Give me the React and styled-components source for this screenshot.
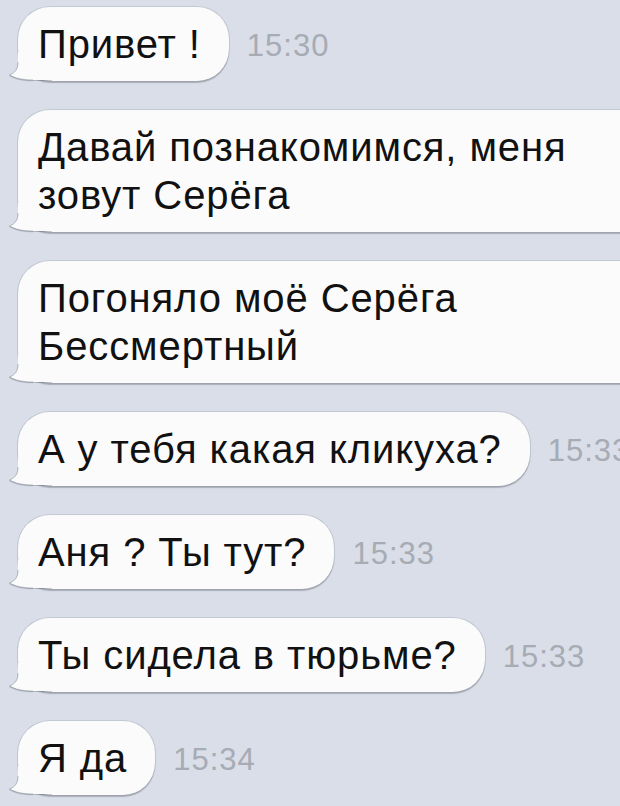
import React from "react";
import styled, { createGlobalStyle } from "styled-components";

const GlobalStyle = createGlobalStyle`
  html, body {
    margin: 0;
    padding: 0;
    width: 620px;
    height: 806px;
    overflow: hidden;
    background: #d9dee8;
  }
`;

const messages = [
  { text: "Привет !", time: "15:30" },
  { text: ["Давай познакомимся, меня", "зовут Серёга"], wide: true },
  { text: ["Погоняло моё Серёга", "Бессмертный"], wide: true },
  { text: "А у тебя какая кликуха?", time: "15:33" },
  { text: "Аня ? Ты тут?", time: "15:33" },
  { text: "Ты сидела в тюрьме?", time: "15:33" },
  { text: "Я да", time: "15:34" },
];

function Tail() {
  return (
    <TailSvg width="48" height="32" viewBox="0 0 48 32">
      <path
        d="M12 2 L12 12 C12 19 9 23 3.5 25 C9 28 16 30 27 30 L46 30 L46 2 Z"
        fill="#fbfbfb"
      />
      <path
        d="M12 12 C12 19 9 23 3.5 25 C9 28 16 30 27 30"
        fill="none"
        stroke="rgba(110,118,132,0.45)"
        strokeWidth="1"
      />
    </TailSvg>
  );
}

function Message({ text, time, wide }) {
  const lines = Array.isArray(text) ? text : [text];
  return (
    <Row>
      <Bubble $wide={wide}>
        <Tail />
        <Text>
          {lines.map((line, i) => (
            <React.Fragment key={i}>
              {i > 0 && <br />}
              {line}
            </React.Fragment>
          ))}
        </Text>
      </Bubble>
      {time && <Time>{time}</Time>}
    </Row>
  );
}

export default function App() {
  return (
    <>
      <GlobalStyle />
      <Chat>
        {messages.map((m, i) => (
          <Message key={i} {...m} />
        ))}
      </Chat>
    </>
  );
}

const Chat = styled.div`
  display: flex;
  flex-direction: column;
  gap: 29px;
  box-sizing: border-box;
  width: 620px;
  height: 806px;
  padding: 7px 0 0 18px;
  overflow: hidden;
`;

const Row = styled.div`
  display: flex;
  align-items: center;
  gap: 18px;
  flex-shrink: 0;
`;

const Bubble = styled.div`
  position: relative;
  flex-shrink: 0;
  width: ${(p) => (p.$wide ? "640px" : "auto")};
  box-sizing: border-box;
  padding: 13px 28px 13px 20px;
  background: #fbfbfb;
  border-radius: 32px;
  box-shadow: 0 0 0 1px rgba(120, 128, 142, 0.22),
    0 1.5px 1px rgba(80, 86, 98, 0.35);
  font-family: "Liberation Sans", Arial, sans-serif;
  font-size: 40px;
  letter-spacing: 0.9px;
  line-height: 48px;
  color: #111;
  white-space: nowrap;
`;

const Text = styled.span`
  position: relative;
  z-index: 1;
`;

const TailSvg = styled.svg`
  position: absolute;
  left: -12px;
  bottom: -1px;
  filter: drop-shadow(0 1px 0.5px rgba(80, 86, 98, 0.3));
`;

const Time = styled.span`
  flex-shrink: 0;
  margin-top: 4px;
  font-family: "Liberation Sans", Arial, sans-serif;
  font-size: 31px;
  letter-spacing: 1px;
  color: #a7abb4;
  white-space: nowrap;
`;
